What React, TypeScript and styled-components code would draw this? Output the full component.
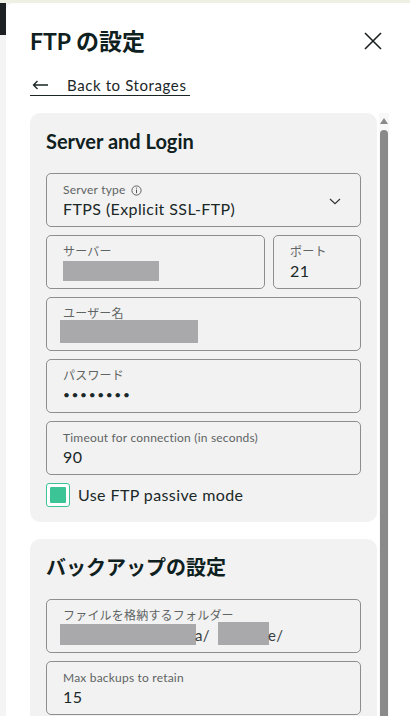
import styled, { createGlobalStyle } from 'styled-components';

const GlobalStyle = createGlobalStyle`
	html, body {
		margin: 0;
		padding: 0;
		background: #ffffff;
	}
	body {
		font-family: Lato, 'Noto Sans CJK JP', sans-serif;
		color: #152424;
	}
	* {
		box-sizing: border-box;
	}
`;

function App() {
	return (
		<Page>
			<GlobalStyle />
			<TopLine />
			<Stage>
				<Backdrop>
					<DarkTab />
				</Backdrop>
				<Panel>
					<Header>
						<Title>FTP の設定</Title>
						<CloseButton aria-label="close">
							<svg width="20" height="20" viewBox="0 0 20 20">
								<path d="M2 2 L18 18 M18 2 L2 18" stroke="#1a1f1f" strokeWidth="1.6" fill="none" />
							</svg>
						</CloseButton>
					</Header>
					<BackLink>
						<svg width="17" height="10" viewBox="0 0 17 10">
							<path d="M16 5 H1.5 M5.5 1 L1.5 5 L5.5 9" stroke="#1a2424" strokeWidth="1.3" fill="none" />
						</svg>
						<span>Back to Storages</span>
					</BackLink>
					<Body>
						<Sections>
							<Card>
								<CardTitle>Server and Login</CardTitle>
								<Fields>
									<Field $row>
										<FieldInner>
											<Label>
												Server type
												<svg width="11" height="11" viewBox="0 0 11 11">
													<circle cx="5.5" cy="5.5" r="4.6" stroke="#555" strokeWidth="0.9" fill="none" />
													<path d="M5.5 4.6 V8.2" stroke="#555" strokeWidth="1" />
													<circle cx="5.5" cy="3.1" r="0.6" fill="#555" />
												</svg>
											</Label>
											<Value>FTPS (Explicit SSL-FTP)</Value>
										</FieldInner>
										<svg width="12" height="7" viewBox="0 0 12 7">
											<path d="M1 1 L6 5.6 L11 1" stroke="#333" strokeWidth="1.2" fill="none" />
										</svg>
									</Field>
									<FieldRow>
										<Field $grow>
											<Label>サーバー</Label>
											<Value>
												<Redact $w={96} $h={20} />
											</Value>
										</Field>
										<Field $width={88}>
											<Label>ポート</Label>
											<Value>21</Value>
										</Field>
									</FieldRow>
									<Field>
										<Label>ユーザー名</Label>
										<Value>
											<Redact $w={138} $h={23} $shift={-3} />
										</Value>
									</Field>
									<Field>
										<Label>パスワード</Label>
										<Value $secret>••••••••</Value>
									</Field>
									<Field>
										<Label>Timeout for connection (in seconds)</Label>
										<Value>90</Value>
									</Field>
									<CheckRow>
										<CheckBox>
											<CheckFill />
										</CheckBox>
										<CheckLabel>Use FTP passive mode</CheckLabel>
									</CheckRow>
								</Fields>
							</Card>
							<Card>
								<CardTitle>バックアップの設定</CardTitle>
								<Fields>
									<Field>
										<Label>ファイルを格納するフォルダー</Label>
										<Value>
											<Redact $w={136} $h={21} $shift={-3} />
											<Tail $gap={-1}>a/</Tail>
											<Redact $w={51} $h={23} $shift={8} />
											<Tail $gap={-1}>e/</Tail>
										</Value>
									</Field>
									<Field>
										<Label>Max backups to retain</Label>
										<Value>15</Value>
									</Field>
								</Fields>
							</Card>
						</Sections>
						<ScrollBar>
							<ScrollArrow />
							<ScrollThumb />
						</ScrollBar>
					</Body>
				</Panel>
			</Stage>
		</Page>
	);
}

const Page = styled.div`
	height: 716px;
	overflow: hidden;
	display: flex;
	flex-direction: column;
	background: #f4f4f4;
`;

const TopLine = styled.div`
	height: 3px;
	flex: none;
	background: #eef0e4;
`;

const Stage = styled.div`
	flex: 1;
	display: flex;
	min-height: 0;
`;

const Backdrop = styled.div`
	width: 6px;
	flex: none;
	background: #f4f4f4;
`;

const DarkTab = styled.div`
	height: 32px;
	background: #1d2023;
`;

const Panel = styled.section`
	flex: 1;
	display: flex;
	flex-direction: column;
	align-items: flex-start;
	background: #ffffff;
	border-top-left-radius: 8px;
	padding: 24px 0 0 24px;
	min-height: 0;
`;

const Header = styled.header`
	align-self: stretch;
	display: flex;
	align-items: center;
	justify-content: space-between;
	padding-right: 27px;
`;

const Title = styled.h1`
	margin: 0;
	font-size: 23px;
	line-height: 28px;
	font-weight: 700;
	color: #0f2020;
`;

const CloseButton = styled.button`
	display: flex;
	padding: 0;
	border: none;
	background: none;
`;

const BackLink = styled.a`
	display: inline-flex;
	align-items: center;
	gap: 18px;
	margin-top: 21px;
	padding: 0 0 1px 2px;
	font-size: 15px;
	line-height: 18px;
	letter-spacing: 0.6px;
	color: #1a2626;
	border-bottom: 1px solid #1a2626;
	width: 160px;
`;

const Body = styled.div`
	flex: 1;
	display: flex;
	gap: 2px;
	margin-top: 17px;
	min-height: 0;
	overflow: hidden;
`;

const Sections = styled.div`
	width: 347px;
	display: flex;
	flex-direction: column;
	gap: 17px;
`;

const Card = styled.div`
	background: #f2f2f2;
	border-radius: 10px;
	padding: 16px 16px 15px 16px;
`;

const CardTitle = styled.h2`
	margin: 0 0 20px;
	font-size: 20px;
	line-height: 24px;
	font-weight: 700;
	color: #0f2020;
`;

const Fields = styled.div`
	display: flex;
	flex-direction: column;
	gap: 8px;
`;

const FieldRow = styled.div`
	display: flex;
	gap: 8px;
`;

const Field = styled.div<{ $row?: boolean; $grow?: boolean; $width?: number }>`
	display: flex;
	flex-direction: ${(p) => (p.$row ? 'row' : 'column')};
	align-items: ${(p) => (p.$row ? 'center' : 'stretch')};
	gap: ${(p) => (p.$row ? '8px' : '0')};
	height: 54px;
	padding: 9px 19px 7px 16px;
	border: 1px solid #8e8e8e;
	border-radius: 5px;
	flex: ${(p) => (p.$grow ? '1' : 'none')};
	width: ${(p) => (p.$width ? `${p.$width}px` : 'auto')};
`;

const FieldInner = styled.div`
	flex: 1;
	display: flex;
	flex-direction: column;
	align-self: stretch;
`;

const Label = styled.div`
	display: flex;
	align-items: center;
	gap: 6px;
	font-size: 12px;
	line-height: 14px;
	letter-spacing: 0.2px;
	color: #5f6464;
	white-space: nowrap;
`;

const Value = styled.div<{ $secret?: boolean }>`
	display: flex;
	align-items: flex-end;
	margin-top: 2px;
	height: 20px;
	font-size: ${(p) => (p.$secret ? '12px' : '16px')};
	letter-spacing: ${(p) => (p.$secret ? '1.6px' : '0.4px')};
	line-height: 20px;
	color: #1a2828;
	white-space: nowrap;
`;

const Redact = styled.span<{ $w: number; $h: number; $shift?: number }>`
	display: block;
	flex: none;
	width: ${(p) => p.$w}px;
	height: ${(p) => p.$h}px;
	margin-left: ${(p) => p.$shift ?? 0}px;
	background: #a9a9ab;
`;

const Tail = styled.span<{ $gap: number }>`
	margin-left: ${(p) => p.$gap}px;
	font-size: 15px;
	line-height: 20px;
	color: #3a4040;
`;

const CheckRow = styled.label`
	display: flex;
	align-items: center;
	gap: 8px;
`;

const CheckBox = styled.span`
	width: 24px;
	height: 24px;
	padding: 3px;
	border: 1px solid #3cc496;
	border-radius: 3px;
	background: #ffffff;
`;

const CheckFill = styled.span`
	display: block;
	width: 100%;
	height: 100%;
	background: #3cc496;
	border-radius: 1px;
`;

const CheckLabel = styled.span`
	font-size: 16px;
	line-height: 20px;
	letter-spacing: 0.4px;
	color: #1a2828;
`;

const ScrollBar = styled.div`
	width: 10px;
	display: flex;
	flex-direction: column;
	align-items: center;
	background: #f8f8f8;
`;

const ScrollArrow = styled.span`
	margin-top: 5px;
	width: 0;
	height: 0;
	border-left: 4px solid transparent;
	border-right: 4px solid transparent;
	border-bottom: 6px solid #8a8a8a;
`;

const ScrollThumb = styled.span`
	flex: 1;
	width: 8px;
	margin-top: 6px;
	border-radius: 4px 4px 0 0;
	background: #8a8a8a;
`;

export default App;
